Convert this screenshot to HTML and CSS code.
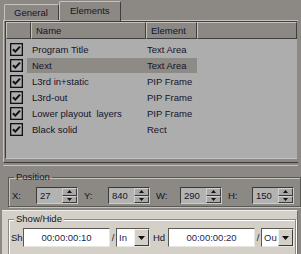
FILE: index.html
```html
<!DOCTYPE html>
<html>
<head>
<meta charset="utf-8">
<link rel="stylesheet" href="styles.css">
</head>
<body>
<div class="tabs">
  <div class="tab">General</div>
  <div class="tab active">Elements</div>
</div>
<div class="panel">
  <div class="table">
    <div class="hdr">
      <div class="hc c0"></div>
      <div class="hc c1">Name</div>
      <div class="hc c2">Element</div>
      <div class="hc c3"></div>
    </div>
    <div class="rows">
      <div class="row"><span class="cb"><svg width="13" height="13" viewBox="0 0 13 13"><rect x="0.6" y="0.6" width="11.8" height="11.8" fill="none" stroke="#111" stroke-width="1.4"/><path d="M3 6.2 L5.3 8.6 L10 3.6" fill="none" stroke="#111" stroke-width="2"/></svg></span><span class="sel"><span class="name">Program Title</span><span class="el">Text Area</span></span></div>
      <div class="row selected"><span class="cb"><svg width="13" height="13" viewBox="0 0 13 13"><rect x="0.6" y="0.6" width="11.8" height="11.8" fill="none" stroke="#111" stroke-width="1.4"/><path d="M3 6.2 L5.3 8.6 L10 3.6" fill="none" stroke="#111" stroke-width="2"/></svg></span><span class="sel"><span class="name">Next</span><span class="el">Text Area</span></span></div>
      <div class="row"><span class="cb"><svg width="13" height="13" viewBox="0 0 13 13"><rect x="0.6" y="0.6" width="11.8" height="11.8" fill="none" stroke="#111" stroke-width="1.4"/><path d="M3 6.2 L5.3 8.6 L10 3.6" fill="none" stroke="#111" stroke-width="2"/></svg></span><span class="sel"><span class="name">L3rd in+static</span><span class="el">PIP Frame</span></span></div>
      <div class="row"><span class="cb"><svg width="13" height="13" viewBox="0 0 13 13"><rect x="0.6" y="0.6" width="11.8" height="11.8" fill="none" stroke="#111" stroke-width="1.4"/><path d="M3 6.2 L5.3 8.6 L10 3.6" fill="none" stroke="#111" stroke-width="2"/></svg></span><span class="sel"><span class="name">L3rd-out</span><span class="el">PIP Frame</span></span></div>
      <div class="row"><span class="cb"><svg width="13" height="13" viewBox="0 0 13 13"><rect x="0.6" y="0.6" width="11.8" height="11.8" fill="none" stroke="#111" stroke-width="1.4"/><path d="M3 6.2 L5.3 8.6 L10 3.6" fill="none" stroke="#111" stroke-width="2"/></svg></span><span class="sel"><span class="name">Lower playout&nbsp; layers</span><span class="el">PIP Frame</span></span></div>
      <div class="row"><span class="cb"><svg width="13" height="13" viewBox="0 0 13 13"><rect x="0.6" y="0.6" width="11.8" height="11.8" fill="none" stroke="#111" stroke-width="1.4"/><path d="M3 6.2 L5.3 8.6 L10 3.6" fill="none" stroke="#111" stroke-width="2"/></svg></span><span class="sel"><span class="name">Black solid</span><span class="el">Rect</span></span></div>
    </div>
  </div>
</div>
<div class="bottom">
  <fieldset class="group pos">
    <legend>Position</legend>
    <div class="spinrow">
      <span class="lbl lx">X:</span>
      <span class="spin"><span class="val">27</span><span class="btns"><span class="sb"><svg width="5" height="3" viewBox="0 0 5 3"><path d="M2.5 0 L5 3 L0 3Z" fill="#111"/></svg></span><span class="sb"><svg width="5" height="3" viewBox="0 0 5 3"><path d="M0 0 L5 0 L2.5 3Z" fill="#111"/></svg></span></span></span>
      <span class="lbl ly">Y:</span>
      <span class="spin"><span class="val">840</span><span class="btns"><span class="sb"><svg width="5" height="3" viewBox="0 0 5 3"><path d="M2.5 0 L5 3 L0 3Z" fill="#111"/></svg></span><span class="sb"><svg width="5" height="3" viewBox="0 0 5 3"><path d="M0 0 L5 0 L2.5 3Z" fill="#111"/></svg></span></span></span>
      <span class="lbl lw">W:</span>
      <span class="spin"><span class="val">290</span><span class="btns"><span class="sb"><svg width="5" height="3" viewBox="0 0 5 3"><path d="M2.5 0 L5 3 L0 3Z" fill="#111"/></svg></span><span class="sb"><svg width="5" height="3" viewBox="0 0 5 3"><path d="M0 0 L5 0 L2.5 3Z" fill="#111"/></svg></span></span></span>
      <span class="lbl lh">H:</span>
      <span class="spin"><span class="val">150</span><span class="btns"><span class="sb"><svg width="5" height="3" viewBox="0 0 5 3"><path d="M2.5 0 L5 3 L0 3Z" fill="#111"/></svg></span><span class="sb"><svg width="5" height="3" viewBox="0 0 5 3"><path d="M0 0 L5 0 L2.5 3Z" fill="#111"/></svg></span></span></span>
    </div>
  </fieldset>
  <div class="lower">
    <fieldset class="group sh">
      <legend>Show/Hide</legend>
      <div class="timerow">
        <span class="tl">Sh</span>
        <span class="time">00:00:00:10</span>
        <span class="slash">/</span>
        <span class="combo"><span class="cv">In</span><span class="cbtn"><svg width="7" height="4" viewBox="0 0 7 4"><path d="M0 0 L7 0 L3.5 4Z" fill="#111"/></svg></span></span>
        <span class="tl hd">Hd</span>
        <span class="time">00:00:00:20</span>
        <span class="slash">/</span>
        <span class="combo c2b"><span class="cv">Ou</span><span class="cbtn"><svg width="7" height="4" viewBox="0 0 7 4"><path d="M0 0 L7 0 L3.5 4Z" fill="#111"/></svg></span></span>
      </div>
    </fieldset>
  </div>
</div>
</body>
</html>
```

FILE: styles.css
```css
* { box-sizing: border-box; }
html, body { margin: 0; padding: 0; }
body {
  width: 301px;
  height: 254px;
  overflow: hidden;
  background: #8c8984;
  font-family: "Liberation Sans", Arial, sans-serif;
  font-size: 9.5px;
  color: #14142a;
}

/* tabs */
.tabs {
  display: flex;
  align-items: flex-end;
  height: 20px;
  padding: 1px 0 0 4px;
}
.tab {
  height: 16px;
  width: 55px;
  padding-left: 9px;
  display: flex;
  align-items: center;
  border-left: 1px solid #c6c3be;
  border-top: 1px solid #c6c3be;
  border-right: 1px solid #3e3e3e;
  border-radius: 2px 2px 0 0;
  background: #8c8984;
}
.tab.active {
  height: 20px;
  width: 62px;
  padding-left: 10px;
  padding-bottom: 2px;
  margin-bottom: -1px;
  z-index: 1;
  position: relative;
}

/* tab panel */
.panel {
  margin-left: 3px;
  width: 295px;
  height: 143px;
  border-top: 1px solid #c6c3be;
  border-left: 1px solid #c6c3be;
  border-bottom: 1px solid #3a3a3a;
  padding: 0 1px 0 1px;
}
.table {
  height: 138px;
  background: #adadad;
  border-top: 1px solid #3e3e3e;
  border-left: 1px solid #3e3e3e;
  border-bottom: 1px solid #c4c1bc;
}
.hdr {
  display: flex;
  height: 17px;
}
.hc {
  background: #8c8984;
  border-top: 1px solid #c6c3be;
  border-left: 1px solid #c6c3be;
  border-right: 1px solid #3e3e3e;
  border-bottom: 1px solid #3e3e3e;
  display: flex;
  align-items: center;
  padding-left: 4px;
}
.c0 { width: 25px; }
.c1 { width: 115px; }
.c2 { width: 51px; }
.c3 { flex: 1; }

.rows { padding-top: 2px; }
.row {
  display: flex;
  align-items: center;
  height: 16px;
}
.cb {
  width: 21px;
  padding-left: 4px;
  display: flex;
  align-items: center;
}
.sel {
  display: flex;
  align-items: center;
  height: 15px;
  padding-left: 5px;
}
.row.selected .sel { background: #8e8a85; }
.name { width: 115px; }
.el { width: 50px; }

/* bottom area */
.bottom {
  margin-left: 3px;
  width: 295px;
  border-top: 1px solid #c6c3be;
  margin-top: 2px;
  padding-top: 6px;
}
.group {
  margin: 0 0 0 5px;
  width: 288px;
  padding: 0;
  border: 1px solid #5a5853;
  box-shadow: inset 1px 1px 0 #c6c3be, 1px 1px 0 #c6c3be;
}
.group legend {
  margin-left: 5px;
  padding: 0 2px;
  line-height: 10px;
}
.pos { height: 35px; }
.spinrow {
  display: flex;
  align-items: center;
  height: 27px;
  padding-left: 3px;
}
.lbl { width: 24px; }
.spin {
  width: 42px;
  height: 17px;
  display: flex;
  background: #b3b3b3;
  border: 1px solid;
  border-color: #3a3a3a #d0cdc8 #d0cdc8 #3a3a3a;
  margin-right: 6px;
}
.val {
  flex: 1;
  padding-left: 3px;
  display: flex;
  align-items: center;
}
.btns {
  width: 15px;
  display: flex;
  flex-direction: column;
}
.sb {
  flex: 1;
  background: #a9a9a9;
  border: 1px solid;
  border-color: #d4d2ce #3a3a3a #3a3a3a #d4d2ce;
  display: flex;
  align-items: center;
  justify-content: center;
}

.lower {
  margin-top: 3px;
  margin-left: -1px;
  height: 46px;
  overflow: hidden;
  background: #d4d0c8;
  border-top: 1px solid #f0eee8;
  border-right: 1px solid #6e6c68;
  padding-top: 3px;
}
.sh {
  margin-left: 6px;
  height: 50px;
  box-shadow: inset 1px 1px 0 #ffffff, 1px 1px 0 #ffffff;
  border-color: #8c8984;
}
.sh legend { background: #d4d0c8; }
.timerow {
  display: flex;
  align-items: center;
  padding-left: 2px;
  padding-top: 0;
  height: 27px;
}
.tl { width: 12px; }
.hd { width: 15px; margin-left: 3px; }
.time {
  width: 87px;
  height: 19px;
  background: #fff;
  border: 1px solid;
  border-color: #5a5853 #e8e6e0 #e8e6e0 #5a5853;
  display: flex;
  align-items: center;
  justify-content: center;
  color: #1c2850;
}
.slash { width: 6px; text-align: center; }
.combo {
  width: 34px;
  height: 19px;
  display: flex;
  background: #fff;
  border: 1px solid;
  border-color: #5a5853 #e8e6e0 #e8e6e0 #5a5853;
}
.c2b { width: 33px; }
.cv { flex: 1; display: flex; align-items: center; padding-left: 2px; color: #1c2850; }
.cbtn {
  width: 15px;
  background: #d4d0c8;
  border: 1px solid;
  border-color: #f4f2ee #3a3a3a #3a3a3a #f4f2ee;
  display: flex;
  align-items: center;
  justify-content: center;
}
```
